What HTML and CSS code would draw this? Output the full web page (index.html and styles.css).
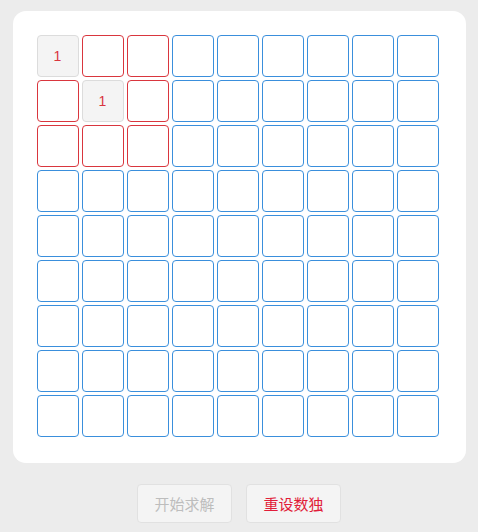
FILE: index.html
```html
<!DOCTYPE html>
<html lang="zh">
<head>
<meta charset="utf-8">
<link rel="stylesheet" href="styles.css">
</head>
<body>
<div class="page">
  <div class="card">
    <div class="grid" id="grid"></div>
  </div>
  <div class="actions">
    <button class="btn" disabled>开始求解</button>
    <button class="btn btn-reset">重设数独</button>
  </div>
</div>
<script>
  var g = document.getElementById('grid');
  for (var r = 0; r < 9; r++) {
    for (var c = 0; c < 9; c++) {
      var d = document.createElement('div');
      d.className = 'cell';
      if (r < 3 && c < 3) d.className += ' conflict';
      if ((r === 0 && c === 0) || (r === 1 && c === 1)) {
        d.className += ' given';
        d.textContent = '1';
      }
      g.appendChild(d);
    }
  }
</script>
</body>
</html>
```

FILE: styles.css
```css
html, body {
  margin: 0;
  padding: 0;
  background: #ececec;
  font-family: "Noto Sans CJK SC", "Liberation Sans", sans-serif;
}
.page {
  width: 478px;
  padding-top: 11px;
  display: flex;
  flex-direction: column;
  align-items: center;
}
.card {
  width: 453px;
  height: 452px;
  box-sizing: border-box;
  background: #fff;
  border-radius: 13px;
  padding: 24px 27px 27px 24px;
}
.grid {
  display: grid;
  grid-template-columns: repeat(9, 42px);
  grid-auto-rows: 42px;
  gap: 3px;
}
.cell {
  box-sizing: border-box;
  border: 1px solid #3a8fdc;
  border-radius: 4px;
  display: flex;
  align-items: center;
  justify-content: center;
  font-family: "Liberation Sans", "Noto Sans CJK SC", sans-serif;
  font-size: 14px;
  color: #d9363e;
}
.cell.conflict {
  border-color: #d9363e;
}
.cell.given {
  background: #f4f4f4;
  border-color: #dcdcdc;
}
.actions {
  display: flex;
  gap: 14px;
  margin-top: 21px;
}
.btn {
  width: 95px;
  height: 39px;
  box-sizing: border-box;
  border: 1px solid #e1e1e1;
  border-radius: 4px;
  background: #f4f4f4;
  font-family: "Noto Sans CJK SC", sans-serif;
  font-size: 15px;
  color: #e11d39;
  padding: 0;
}
.btn:disabled {
  color: #bdbdbd;
}
```
